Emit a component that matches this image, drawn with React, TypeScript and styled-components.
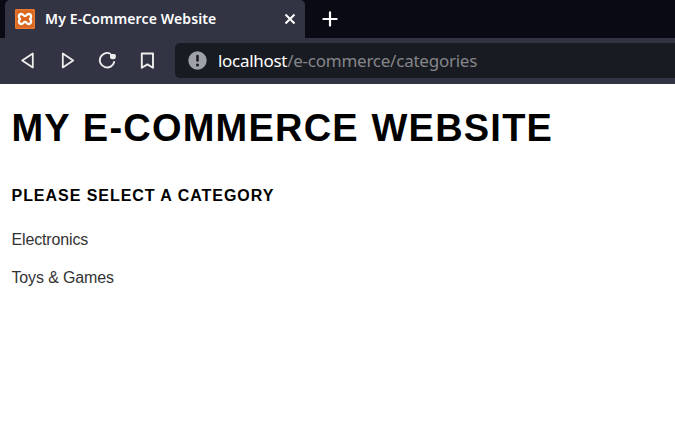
import React from "react";
import styled, { createGlobalStyle } from "styled-components";

const GlobalStyle = createGlobalStyle`
  * { box-sizing: border-box; }
  body { margin: 0; background: #fff; overflow: hidden; }
`;

const Browser = styled.div`
  display: flex;
  flex-direction: column;
  width: 100%;
  height: 423px;
  background: #fff;
`;

const TabStrip = styled.div`
  display: flex;
  height: 38px;
  padding-left: 5px;
  background: #0a0a14;
`;

const Tab = styled.div`
  display: flex;
  align-items: center;
  width: 300px;
  padding: 0 9px 0 10px;
  border-radius: 5px 5px 0 0;
  background: #323443;
`;

const TabTitle = styled.span`
  flex: 1;
  margin-left: 10px;
  color: #fff;
  font: 600 14px/20px "Noto Sans", "Open Sans", sans-serif;
  letter-spacing: 0.13px;
  white-space: nowrap;
`;

const IconButton = styled.button`
  display: flex;
  align-items: center;
  justify-content: center;
  width: 40px;
  padding: 0;
  border: 0;
  background: transparent;
`;

const CloseButton = styled(IconButton)`
  width: 12px;
`;

const NewTabButton = styled(IconButton)`
  width: 50px;
`;

const Toolbar = styled.div`
  display: flex;
  height: 46px;
  padding: 5px 0 6px 7px;
  background: #323443;
`;

const AddressBar = styled.div`
  display: flex;
  flex: 1;
  align-items: center;
  margin-left: 8px;
  padding-left: 13px;
  border-radius: 5px 0 0 5px;
  background: #181b21;
`;

const Url = styled.span`
  margin-left: 11px;
  color: #85868a;
  font: 400 17px/24px "Noto Sans", "Open Sans", sans-serif;
  letter-spacing: -0.24px;
  white-space: nowrap;
`;

const Host = styled.span`
  color: #fff;
  letter-spacing: -0.3px;
`;

const Page = styled.main`
  padding: 20px 12px 20px 11.5px;
  font-family: "Liberation Sans", Arial, sans-serif;
`;

const Title = styled.h1`
  margin: 0;
  color: #000;
  font-size: 38px;
  line-height: 48px;
  letter-spacing: 1.22px;
  word-spacing: 0.8px;
  text-transform: uppercase;
  white-space: nowrap;
`;

const Subtitle = styled.h2`
  margin: 34px 0 0;
  color: #000;
  font-size: 16px;
  line-height: 20px;
  letter-spacing: 0.96px;
  text-transform: uppercase;
`;

const Category = styled.p`
  margin: 24px 0 0;
  color: #333;
  font-size: 16px;
  line-height: 20px;
  letter-spacing: -0.14px;

  & + & {
    margin-top: 18px;
  }
`;

const XamppIcon = () => (
  <svg width="20" height="20" viewBox="0 0 20 20">
    <rect width="20" height="20" rx="1" fill="#d9661c" />
    <rect x="0.8" y="0.8" width="18.4" height="18.4" rx="1" fill="none" stroke="#ef8a47" strokeWidth="0.8" />
    <path
      d="M5.1 10C3.1 8.4 3.5 5 6.4 5C8.6 5 8.2 7.2 10 7.2C11.8 7.2 11.4 5 13.6 5C16.5 5 16.9 8.4 14.9 10C16.9 11.6 16.5 15 13.6 15C11.4 15 11.8 12.8 10 12.8C8.2 12.8 8.6 15 6.4 15C3.5 15 3.1 11.6 5.1 10Z"
      fill="none"
      stroke="#fff"
      strokeWidth="2.3"
      strokeLinejoin="round"
    />
  </svg>
);

const CloseIcon = () => (
  <svg width="12" height="12" viewBox="0 0 12 12" stroke="#fff" strokeWidth="2">
    <path d="M1.5 1.5L10.5 10.5M10.5 1.5L1.5 10.5" />
  </svg>
);

const PlusIcon = () => (
  <svg width="16" height="16" viewBox="0 0 16 16" stroke="#fff" strokeWidth="2.2" strokeLinecap="round">
    <path d="M8 1.4V14.6M1.4 8H14.6" />
  </svg>
);

const BackIcon = () => (
  <svg width="20" height="20" viewBox="0 0 20 20" fill="none" stroke="#eee" strokeWidth="1.8" strokeLinejoin="round">
    <path d="M15.8 2.4V16.4L5.2 9.4Z" />
  </svg>
);

const ForwardIcon = () => (
  <svg width="20" height="20" viewBox="0 0 20 20" fill="none" stroke="#eee" strokeWidth="1.8" strokeLinejoin="round">
    <path d="M5.8 2.4V16.4L16.2 9.4Z" />
  </svg>
);

const ReloadIcon = () => (
  <svg width="20" height="20" viewBox="0 0 20 20">
    <path
      d="M13 2.5A7.3 7.3 0 1 0 17.2 11"
      fill="none"
      stroke="#eee"
      strokeWidth="1.9"
      strokeLinecap="round"
    />
    <path d="M13 3H17.3A1.5 1.5 0 0 1 18.8 4.5V6A2.2 2.2 0 0 1 16.6 8.2H15.5A2.5 2.5 0 0 1 13 5.7Z" fill="#eee" />
  </svg>
);

const BookmarkIcon = () => (
  <svg width="20" height="20" viewBox="0 0 20 20" fill="none" stroke="#eee" strokeWidth="1.9" strokeLinejoin="round">
    <path d="M4.8 2.5H16V16.7L10.4 13.4L4.8 16.7Z" />
  </svg>
);

const NotSecureIcon = () => (
  <svg width="19" height="19" viewBox="0 0 19 19">
    <circle cx="9.5" cy="9.5" r="9.2" fill="#9fa1a8" />
    <path d="M9.5 4.9V9.6" stroke="#181b21" strokeWidth="2.5" strokeLinecap="round" />
    <circle cx="9.5" cy="13.9" r="1.5" fill="#181b21" />
  </svg>
);

export default function App() {
  return (
    <>
      <GlobalStyle />
      <Browser>
        <TabStrip>
          <Tab>
            <XamppIcon />
            <TabTitle>My E-Commerce Website</TabTitle>
            <CloseButton aria-label="Close tab"><CloseIcon /></CloseButton>
          </Tab>
          <NewTabButton aria-label="New tab"><PlusIcon /></NewTabButton>
        </TabStrip>
        <Toolbar>
          <IconButton aria-label="Back"><BackIcon /></IconButton>
          <IconButton aria-label="Forward"><ForwardIcon /></IconButton>
          <IconButton aria-label="Reload"><ReloadIcon /></IconButton>
          <IconButton aria-label="Bookmark"><BookmarkIcon /></IconButton>
          <AddressBar>
            <NotSecureIcon />
            <Url><Host>localhost</Host>/e-commerce/categories</Url>
          </AddressBar>
        </Toolbar>
        <Page>
          <Title>My E-Commerce Website</Title>
          <Subtitle>Please select a category</Subtitle>
          <Category>Electronics</Category>
          <Category>Toys &amp; Games</Category>
        </Page>
      </Browser>
    </>
  );
}
